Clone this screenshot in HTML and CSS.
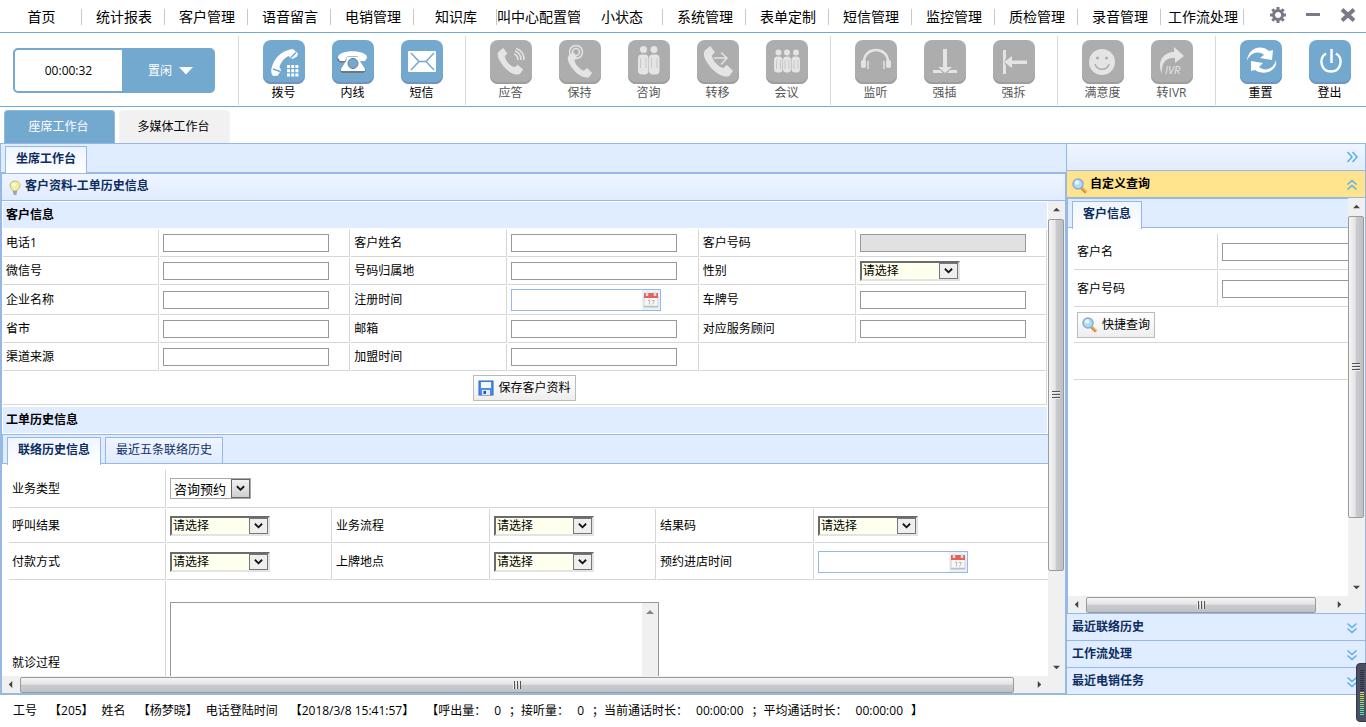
FILE: index.html
```html
<!DOCTYPE html>
<html lang="zh-CN">
<head>
<meta charset="utf-8">
<title>座席工作台</title>
<link rel="stylesheet" href="styles.css">
</head>
<body>
<svg class="sprite" aria-hidden="true">
  <symbol id="i-drop" viewBox="0 0 10 8"><path d="M1 1.500 5 5.500 9 1.500" fill="none" stroke="#111" stroke-width="2"/></symbol>
  <symbol id="i-down" viewBox="0 0 10 12"><path d="M0.500 1.500 5 5.500 9.500 1.500M0.500 6.500 5 10.500 9.500 6.500" fill="none" stroke="#5aaee6" stroke-width="1.500"/></symbol>
  <symbol id="i-tri" viewBox="0 0 8 8"><path d="M4 2 8 6H0z" fill="#444"/></symbol>
  <symbol id="i-grip" viewBox="0 0 8 8"><path d="M0 .5h8M0 3.500h8M0 6.500h8" stroke="#555"/><path d="M0 1.500h8M0 4.500h8M0 7.500h8" stroke="#eee"/></symbol>
  <symbol id="i-search" viewBox="0 0 16 16">
    <path d="M9.500 10 14 14.500" stroke="#c9822b" stroke-width="3"/><path d="M10 10 14.500 14" stroke="#f3b552" stroke-width="1.500"/>
    <circle cx="6" cy="6" r="5" fill="#a8dcfb" stroke="#8fa9d0" stroke-width="1.500"/><circle cx="5" cy="4.500" r="2.300" fill="#e4f6ff"/>
  </symbol>
  <symbol id="i-calendar" viewBox="0 0 16 16">
    <path d="M1 4h14v11H1z" fill="#f7f7f7" stroke="#d3d0d0"/><path d="M1 14.500h14" stroke="#c2bfbb" stroke-width="1.500"/><path d="M1 1h14v5H1z" fill="#e8605c"/>
    <path d="M4 0v4M12 0v4" stroke="#ddd" stroke-width="2.500"/><path d="M5 8.500 6.500 8v4.500M8.500 8.500h3L9.500 12.500" fill="none" stroke="#bbb"/>
  </symbol>
  <symbol id="i-handset" viewBox="0 0 30 30">
    <path d="M2 4 7 0 11.500 6 8.500 9.500C10 15 14 19.500 19.500 21.500L23 18.500 29 24 25.500 29C21 31 12.500 27 7 20 2 13.500-1 8 2 4z"/>
    <path d="M6 9.500 11 5.500M20 23.500 24 18.500" class="cut"/>
  </symbol>
</svg>

<header>
  <nav class="menu">
    <div class="menu-items">
      <a href="#">首页</a><a href="#">统计报表</a><a href="#">客户管理</a><a href="#">语音留言</a><a href="#">电销管理</a><a href="#">知识库</a><a href="#" class="long">呼叫中心配置管理</a><a href="#">小状态</a><a href="#">系统管理</a><a href="#">表单定制</a><a href="#">短信管理</a><a href="#">监控管理</a><a href="#">质检管理</a><a href="#">录音管理</a><a href="#">工作流处理</a>
    </div>
    <div class="window-buttons">
      <button type="button" aria-label="设置"><svg width="18" height="18" viewBox="0 0 18 18"><circle cx="9" cy="9" r="4.500" fill="none" stroke="#7b7887" stroke-width="3"/><path d="M9 1v3M9 14v3M1 9h3M14 9h3M3.300 3.300 5.500 5.500M12.500 12.500 14.700 14.700M3.300 14.700 5.500 12.500M12.500 5.500 14.700 3.300" stroke="#7b7887" stroke-width="3"/></svg></button>
      <button type="button" aria-label="最小化"><svg width="18" height="18" viewBox="0 0 18 18"><path d="M2 8.500h14" stroke="#7b7887" stroke-width="3"/></svg></button>
      <button type="button" aria-label="关闭"><svg width="18" height="18" viewBox="0 0 18 18"><path d="M3 3.500 15 14.500M15 3.500 3 14.500" stroke="#7b7887" stroke-width="4"/></svg></button>
    </div>
  </nav>

  <div class="toolbar">
    <div class="status">
      <span class="status-time">00:00:32</span>
      <button type="button" class="status-button">置闲<svg width="14" height="8" viewBox="0 0 14 8"><path d="M0 0h14L7 7.500z" fill="#fff"/></svg></button>
    </div>
    <div class="tools">
      <button type="button" class="tool"><svg viewBox="0 0 42 44"><path d="M24 10.500C26 9.500 28 9.500 30 9L35 13.500 34 16.500 29.500 19 25.500 16C21 18 17.500 23 16.500 27L18 30 15 35.500 10 36C7.500 33 8 29 9.500 25 12.500 17.500 17 13 24 10.500z"/><path d="M28 17.500 33 12.500M10 29 17 31.500" class="cut"/><path d="M24 25h3v3h-3zM28.200 25h3v3h-3zM32.400 25h3v3h-3zM24 29.200h3v3h-3zM28.200 29.200h3v3h-3zM32.400 29.200h3v3h-3zM24 33.400h3v3h-3zM28.200 33.400h3v3h-3zM32.400 33.400h3v3h-3z"/></svg>拨号</button>
      <button type="button" class="tool"><svg viewBox="0 0 42 44"><path class="shade" d="M6 17 5 20 9 23 13 22 11 27 8 31 10 33H31L34 31 29 23z"/><path d="M6 18C5 9 36 9 35 18L33 21H28L26 16.500C23 16 18 16 15 16.500L13 21H8z"/><path d="M15 17h12l1 4 5 8v2H9v-2l5-8z"/><circle cx="21" cy="23.500" r="5" fill="#74a9cf" stroke="#66798b"/></svg>内线</button>
      <button type="button" class="tool"><svg viewBox="0 0 42 44"><rect x="7" y="11" width="28" height="21" rx="1"/><path d="M10 13 18 21.500H25L33 13M10 30 18 21.500M33 30 25 21.500" class="cut"/></svg>短信</button>
    </div>
    <div class="tools">
      <button type="button" class="tool" disabled><svg viewBox="0 0 42 44"><use href="#i-handset" x="7" y="7" width="27" height="29"/><path class="line" d="M24 14C26.500 15 28 17 28 20M25 11C29 12.500 31 16 31 20M26 8.500C31 10 34 14 34 20"/></svg>应答</button>
      <button type="button" class="tool" disabled><svg viewBox="0 0 42 44"><circle class="line" cx="17" cy="12" r="6.500"/><circle class="line" cx="17" cy="12" r="3.500"/><use href="#i-handset" x="8" y="12" width="26" height="26"/></svg>保持</button>
      <button type="button" class="tool" disabled><svg viewBox="0 0 42 44"><circle cx="15.500" cy="9.500" r="3.500"/><circle cx="26" cy="9.500" r="3.500"/><rect x="10" y="14.500" width="10.500" height="20" rx="4"/><rect x="21" y="14.500" width="10.500" height="20" rx="4"/><path class="cut thin" d="M12.500 18v10M18 18v10M23.500 18v10M29 18v10"/></svg>咨询</button>
      <button type="button" class="tool" disabled><svg viewBox="0 0 42 44"><use href="#i-handset" x="6" y="6" width="31" height="31"/><path class="line" d="M17 18H30M24 12.500 30 18 24 24.500"/></svg>转移</button>
      <button type="button" class="tool" disabled><svg viewBox="0 0 42 44"><circle cx="12.500" cy="12.500" r="3"/><circle cx="21" cy="12.500" r="3"/><circle cx="30" cy="12.500" r="3"/><rect x="8" y="16.500" width="8.500" height="16" rx="3.500"/><rect x="17" y="16.500" width="8" height="16" rx="3.500"/><rect x="25.500" y="16.500" width="8.500" height="16" rx="3.500"/><path class="cut thin" d="M10.500 20v9M14.500 20v9M19 20v9M23 20v9M28 20v9M32 20v9"/></svg>会议</button>
    </div>
    <div class="tools">
      <button type="button" class="tool" disabled><svg viewBox="0 0 42 44"><path class="line bold" d="M9 22C9 6 33 6 33 22"/><rect x="6" y="20" width="5" height="8" rx="2"/><rect x="31" y="20" width="5" height="8" rx="2"/><path class="line" d="M13 21v8M29 21v8"/></svg>监听</button>
      <button type="button" class="tool" disabled><svg viewBox="0 0 42 44"><path d="M19 9h4v18h5l-7 6-7-6h5zM9 30h7l3 3H9zM33 30h-7l-3 3h10z"/></svg>强插</button>
      <button type="button" class="tool" disabled><svg viewBox="0 0 42 44"><path d="M34 20.500v3.500H19v4l-8-6 8-6v4.500zM10 10h3v8l-2 4 2 4v8h-3z"/></svg>强拆</button>
    </div>
    <div class="tools">
      <button type="button" class="tool" disabled><svg viewBox="0 0 42 44"><circle cx="20" cy="22" r="13"/><path class="cut" d="M13 24C15 31 25 31 27 24"/><circle class="dot" cx="15.500" cy="18" r="1.500"/><circle class="dot" cx="24.500" cy="18" r="1.500"/></svg>满意度</button>
      <button type="button" class="tool" disabled><svg viewBox="0 0 42 44"><path d="M11 34C5 20 14 12 23 12V7L33 16 24 23V18C14 17 10 24 11 34z"/><text class="ivr" x="14" y="34">IVR</text></svg>转IVR</button>
    </div>
    <div class="tools">
      <button type="button" class="tool"><svg viewBox="0 0 42 44"><path d="M7 21C8 8 21 4 29 11L33 10 32 20 20 18 24 15C18 10 10 13 7 21zM36 20C38 32 23 36 15 30L11 31 11 21 23 23 19 27C25 32 34 29 36 20z"/></svg>重置</button>
      <button type="button" class="tool"><svg viewBox="0 0 42 44"><path class="line bold" d="M17 13.500C9 18 12 31.500 22 31.500S35 18 27 13.500M22.500 9v14"/></svg>登出</button>
    </div>
  </div>
</header>

<div class="page-tabs">
  <button type="button" class="page-tab active">座席工作台</button>
  <button type="button" class="page-tab">多媒体工作台</button>
</div>

<main>
  <section class="work">
    <div class="tabs"><button type="button" class="tab active">坐席工作台</button></div>
    <div class="panel">
      <h2 class="panel-title"><svg width="12" height="16" viewBox="0 0 12 16"><path d="M6 1C9 1 11 3 11 5.500 11 8 8.500 9 8 11H4C3.500 9 1 8 1 5.500 1 3 3 1 6 1z" fill="#f3f0a0" stroke="#bfb97d"/><path d="M4 12h4M4.500 14h3" stroke="#8a8da0" stroke-width="1.500"/><circle cx="5" cy="4.500" r="1.500" fill="#fff"/></svg>客户资料-工单历史信息</h2>
      <div class="scroll-row">
        <div class="viewport">
          <h3 class="section">客户信息</h3>
          <table class="form customer">
            <colgroup><col class="c-label"><col><col class="c-label"><col><col class="c-label"><col></colgroup>
            <tr><td><label for="tel">电话1</label></td><td><input id="tel" class="text"></td><td><label for="name">客户姓名</label></td><td><input id="name" class="text"></td><td><label for="no">客户号码</label></td><td><input id="no" class="text" disabled></td></tr>
            <tr><td><label for="wx">微信号</label></td><td><input id="wx" class="text"></td><td><label for="area">号码归属地</label></td><td><input id="area" class="text"></td><td><label for="sex">性别</label></td><td><span class="pick"><select id="sex"><option>请选择</option></select><svg><use href="#i-drop"/></svg></span></td></tr>
            <tr class="r-date"><td><label for="corp">企业名称</label></td><td><input id="corp" class="text"></td><td><label for="reg">注册时间</label></td><td><span class="date"><input id="reg"><svg><use href="#i-calendar"/></svg></span></td><td><label for="plate">车牌号</label></td><td><input id="plate" class="text"></td></tr>
            <tr><td><label for="city">省市</label></td><td><input id="city" class="text"></td><td><label for="mail">邮箱</label></td><td><input id="mail" class="text"></td><td><label for="adv">对应服务顾问</label></td><td><input id="adv" class="text"></td></tr>
            <tr><td><label for="src">渠道来源</label></td><td><input id="src" class="text"></td><td><label for="join">加盟时间</label></td><td><input id="join" class="text"></td><td colspan="2"></td></tr>
            <tr class="r-save"><td colspan="6"><button type="button" class="action"><svg width="16" height="16" viewBox="0 0 16 16"><rect x="1" y="1" width="14" height="14" fill="#4a8df0" stroke="#2c64c8"/><rect x="3" y="2" width="10" height="6" fill="#f2f8ff"/><rect x="4" y="10" width="8" height="5" fill="#e8ecf6"/><rect x="5.500" y="11" width="2.500" height="3" fill="#2c4f9e"/></svg>保存客户资料</button></td></tr>
          </table>
          <h3 class="section">工单历史信息</h3>
          <div class="tabs nested"><button type="button" class="tab active">联络历史信息</button><button type="button" class="tab">最近五条联络历史</button></div>
          <div class="tab-body">
            <table class="form order">
              <colgroup><col class="o-label"><col class="o-field"><col class="o-label"><col class="o-field"><col class="o-label"><col></colgroup>
              <tr class="r-type"><td><label for="type">业务类型</label></td><td colspan="5"><span class="pick plain"><select id="type"><option>咨询预约</option></select><svg><use href="#i-drop"/></svg></span></td></tr>
              <tr class="r-call"><td><label for="res">呼叫结果</label></td><td><span class="pick"><select id="res"><option>请选择</option></select><svg><use href="#i-drop"/></svg></span></td><td><label for="flow">业务流程</label></td><td><span class="pick"><select id="flow"><option>请选择</option></select><svg><use href="#i-drop"/></svg></span></td><td><label for="code">结果码</label></td><td><span class="pick"><select id="code"><option>请选择</option></select><svg><use href="#i-drop"/></svg></span></td></tr>
              <tr class="r-pay"><td><label for="pay">付款方式</label></td><td><span class="pick"><select id="pay"><option>请选择</option></select><svg><use href="#i-drop"/></svg></span></td><td><label for="place">上牌地点</label></td><td><span class="pick"><select id="place"><option>请选择</option></select><svg><use href="#i-drop"/></svg></span></td><td><label for="visit">预约进店时间</label></td><td><span class="date"><input id="visit"><svg><use href="#i-calendar"/></svg></span></td></tr>
              <tr class="r-note"><td><label for="note">就诊过程</label></td><td colspan="5"><span class="note"><textarea id="note"></textarea><span class="note-bar"><svg><use href="#i-tri"/></svg></span></span></td></tr>
            </table>
          </div>
        </div>
        <div class="bar vertical"><svg class="arrow"><use href="#i-tri"/></svg><div class="thumb work-v"><svg><use href="#i-grip"/></svg></div><svg class="arrow flip"><use href="#i-tri"/></svg></div>
      </div>
      <div class="bar horizontal"><svg class="arrow left"><use href="#i-tri"/></svg><div class="thumb work-h"><svg><use href="#i-grip"/></svg></div><svg class="arrow right"><use href="#i-tri"/></svg></div>
    </div>
  </section>

  <aside class="side">
    <div class="side-head"><button type="button" class="fold" aria-label="收起"><svg width="12" height="12" viewBox="0 0 12 12"><path d="M1.500 1 6 6 1.500 11M6.500 1 11 6 6.500 11" fill="none" stroke="#5aaee6" stroke-width="1.500"/></svg></button></div>
    <button type="button" class="acc current"><svg class="lens"><use href="#i-search"/></svg><span>自定义查询</span><svg class="chev flip"><use href="#i-down"/></svg></button>
    <div class="side-body">
      <div class="scroll-row">
        <div class="viewport">
          <div class="tabs query-tabs"><button type="button" class="tab active">客户信息</button></div>
          <div class="tab-body">
            <table class="form query">
              <colgroup><col class="q-label"><col></colgroup>
              <tr><td><label for="qname">客户名</label></td><td><input id="qname" class="text"></td></tr>
              <tr><td><label for="qno">客户号码</label></td><td><input id="qno" class="text"></td></tr>
              <tr class="r-find"><td colspan="2"><button type="button" class="action"><svg width="16" height="16"><use href="#i-search"/></svg>快捷查询</button></td></tr>
              <tr><td colspan="2"></td></tr>
            </table>
          </div>
        </div>
        <div class="bar vertical"><svg class="arrow"><use href="#i-tri"/></svg><div class="thumb side-v"><svg><use href="#i-grip"/></svg></div><svg class="arrow flip"><use href="#i-tri"/></svg></div>
      </div>
      <div class="bar horizontal"><svg class="arrow left"><use href="#i-tri"/></svg><div class="thumb side-h"><svg><use href="#i-grip"/></svg></div><svg class="arrow right"><use href="#i-tri"/></svg></div>
    </div>
    <button type="button" class="acc"><span>最近联络历史</span><svg class="chev"><use href="#i-down"/></svg></button>
    <button type="button" class="acc"><span>工作流处理</span><svg class="chev"><use href="#i-down"/></svg></button>
    <button type="button" class="acc"><span>最近电销任务</span><svg class="chev"><use href="#i-down"/></svg></button>
  </aside>
</main>

<footer>
  <span class="key">工号</span><span>【205】</span><span class="key">姓名</span><span>【杨梦晓】</span><span class="key">电话登陆时间</span><span class="key">【2018/3/8 15:41:57】</span><span>【呼出量：</span><span>0</span><span>；接听量：</span><span>0</span><span>；当前通话时长：</span><span>00:00:00</span><span>；平均通话时长：</span><span>00:00:00</span><span>】</span>
</footer>
<svg class="meter" viewBox="0 0 10 59">
  <defs><linearGradient id="level" gradientUnits="userSpaceOnUse" x1="0" y1="29" x2="0" y2="53"><stop offset="0" stop-color="#e9e04a"/><stop offset="0.5" stop-color="#8fe07a"/><stop offset="1" stop-color="#45e6c6"/></linearGradient></defs>
  <path d="M10.500.5H4Q.5.500.5 4V55Q.5 58.500 4 58.500H10.500z" fill="#4a4f62" stroke="#33384a"/>
  <path d="M6 7V29" stroke="#2b2f3f" stroke-width="4" stroke-dasharray="1 1"/>
  <path d="M6 29V53" stroke="url(#level)" stroke-width="4" stroke-dasharray="1 1"/>
</svg>
</body>
</html>
```
FILE: styles.css
```css
* { box-sizing: border-box; }
html { height: 100%; }
body {
  display: flex;
  flex-direction: column;
  height: 100%;
  margin: 0;
  overflow: hidden;
  background: #fff;
  color: #000;
  font: 12px/18px "Open Sans", "Noto Sans CJK SC", sans-serif;
}
button, input, select, textarea { margin: 0; padding: 0; border: 0; border-radius: 0; font: inherit; color: inherit; background: none; }
h2, h3 { margin: 0; font-size: 12px; line-height: 18px; }
svg { display: block; flex: none; }
.sprite { position: absolute; width: 0; height: 0; }
.flip { transform: rotate(180deg); }

/* Menu */
.menu { display: flex; justify-content: space-between; height: 33px; border-bottom: 1px solid #74a9cf; }
.menu-items { display: flex; }
.menu-items a {
  display: flex;
  align-items: center;
  justify-content: center;
  width: 83px;
  height: 32px;
  padding: 2px 0 0 1px;
  background: linear-gradient(#c8c8c8, #c8c8c8) right 9px / 1px 16px no-repeat;
  color: #000;
  font-size: 14px;
  line-height: 24px;
  white-space: nowrap;
  text-decoration: none;
}
.menu-items .long { overflow: hidden; }
.menu-items a:first-child { width: 82px; }
.window-buttons { display: flex; gap: 17px; padding: 6px 9px 8px 0; }

/* Toolbar */
.toolbar { display: flex; height: 74px; border-bottom: 1px solid #74a9cf; }
.status {
  display: flex;
  flex: none;
  width: 202px;
  height: 45px;
  margin: 15px 23px 0 13px;
  border: 2px solid #74a9cf;
  border-radius: 5px;
}
.status-time { width: 107px; line-height: 41px; text-align: center; }
.status-button { display: flex; flex: 1; align-items: center; justify-content: center; gap: 7px; padding-left: 6px; background: #74a9cf; color: #fff; }
.tools { display: flex; flex: none; height: 69px; margin-top: 3px; padding: 0 9px 0 10px; border-left: 1px solid #d9d9d9; }
.tools:last-child { padding-right: 0; }
.tool { display: flex; flex-direction: column; align-items: center; width: 69px; padding-top: 4px; }
.tool > svg {
  width: 42px;
  height: 44px;
  border-radius: 8px;
  background: #74a9cf;
  box-shadow: inset 0 -2px #7591bd;
  fill: #fff;
}
.tool .cut { fill: none; stroke: #74a9cf; stroke-width: 1.5; }
.tool .line { fill: none; stroke: #fff; stroke-width: 1.5; }
.tool .bold { stroke-width: 2.5; }
.tool .thin { stroke-width: 0.5; }
.tool .shade { fill: #66798b; }
.tool:disabled { color: #555; }
.tool:disabled > svg { background: #adadad; box-shadow: inset 0 -2px #9e9e9e; fill: #e4e4e4; }
.tool:disabled .line { stroke: #e4e4e4; }
.tool:disabled .cut { stroke: #adadad; }
.tool .dot { fill: #adadad; }
.ivr { font: italic 11px "Open Sans", sans-serif; }

/* Page tabs */
.page-tabs { display: flex; gap: 4px; height: 36px; padding: 3px 4px 0; }
.page-tab { width: 111px; padding-right: 2px; border: 1px solid #f4f4f4; border-bottom: 0; border-radius: 4px 4px 0 0; background: #f1f1f1; }
.page-tab.active { background: #74a9cf; border-color: #8dbbe0; color: #fff; }

/* Tab strips and panels */
main { display: grid; flex: 1; grid-template-columns: minmax(0, 1fr) 300px; min-height: 0; }
.tabs { display: flex; flex: none; gap: 4px; height: 30px; padding: 2px 4px 0; border: solid #95b8e7; border-width: 1px 0; background: #e0ecff; }
.tabs.nested { border-left-width: 1px; }
.tab { height: 27px; padding: 0 10px 2px; border: 1px solid #95b8e7; background: linear-gradient(#eff5ff, #e0ecff); color: #0e2d5f; white-space: nowrap; }
.tab.active { height: 28px; padding-bottom: 3px; border-bottom: 0; background: linear-gradient(#eff5ff, #fff); font-weight: bold; }
.work { display: flex; flex-direction: column; min-height: 0; border: solid #95b8e7; border-width: 0 0 1px 1px; }
.panel { display: flex; flex: 1; flex-direction: column; min-height: 0; border: 1px solid #95b8e7; }
.panel-title {
  display: flex;
  align-items: center;
  gap: 4px;
  height: 27px;
  padding: 0 7px 3px;
  border-bottom: 1px solid #95b8e7;
  background: linear-gradient(#eff5ff, #e0ecff);
  color: #0e2d5f;
}
.panel-title svg { margin-top: 5px; }
.scroll-row { display: flex; flex: 1; min-height: 0; }
.viewport { flex: 1; min-width: 0; overflow: hidden; }
.section { height: 26px; margin: 1px; padding: 4px 3px; background: #e0ecff; }
.tab-body { padding: 5px 0 0 5px; }
.nested + .tab-body { padding-left: 6px; }

/* Forms */
.form { border-spacing: 1px; table-layout: fixed; width: 100%; }
.form td { height: 27px; padding: 0 3px; border: solid #d6d6d6; border-width: 0 1px 1px 0; vertical-align: middle; }
.c-label { width: 156px; }
.form .r-date td { height: 29px; }
.form .r-save td { height: 33px; text-align: center; }
.form.order { width: calc(100% + 60px); }
.o-label { width: 157px; }
.o-field { width: 165px; }
.form .r-type td { height: 38px; }
.form .r-call td { height: 34px; }
.form .r-pay td { height: 36px; }
.form .r-note td { height: 165px; }
.form.query { width: calc(100% + 60px); }
.form.query td { height: 36px; }
.form.query .r-find td { height: 35px; }
.q-label { width: 144px; }
.text { display: block; width: 166px; height: 18px; padding: 0 3px; border: 1px solid #999; background: #fff; }
.text:disabled { background: #e1e1e1; }
.action {
  display: inline-flex;
  align-items: center;
  gap: 4px;
  height: 26px;
  padding: 0 4px;
  border: 1px solid #bbb;
  background: linear-gradient(#fff, #eee);
  vertical-align: middle;
}
.pick {
  display: flex;
  position: relative;
  width: 100px;
  height: 20px;
  border: 2px solid;
  border-color: #6b6b6b #e3e3e3 #e3e3e3 #6b6b6b;
  background: #ffffee;
}
.pick select { width: 100%; padding: 0 1px; appearance: none; line-height: 16px; }
.pick svg { position: absolute; top: 0; right: 0; width: 19px; height: 16px; padding: 3px 4px; border: 1px solid #777; background: #efefef; pointer-events: none; }
.pick.plain { width: 81px; height: 21px; border: 1px solid #a9a9a9; background: #fff; }
.pick.plain select { padding: 0 3px; font-size: 13px; }
.pick.plain svg { width: 19px; height: 19px; border-color: #666; background: linear-gradient(#f2f2f2, #cfcfcf); }
.date { display: flex; width: 150px; height: 22px; border: 1px solid #95b8e7; background: #fff; }
.date input { flex: 1; min-width: 0; padding: 0 3px; }
.date svg { width: 18px; height: 20px; padding: 2px 1px; background: #e9f1ff; }
.note { display: flex; width: 489px; height: 123px; border: 1px solid #999; }
.note textarea { flex: 1; resize: none; overflow: hidden; }
.note-bar { width: 16px; padding: 5px 4px; background: #f0f0f0; }
.note-bar svg { width: 8px; height: 8px; opacity: 0.6; }

/* Scroll bars */
.bar { display: flex; flex: none; background: #f0f0f0; }
.bar.vertical { flex-direction: column; justify-content: space-between; width: 17px; }
.bar.horizontal { justify-content: space-between; height: 17px; padding-right: 17px; }
.arrow { width: 17px; height: 17px; padding: 5px; }
.left { transform: rotate(-90deg); }
.right { transform: rotate(90deg); }
.thumb { display: flex; align-items: center; justify-content: center; border: 1px solid #9a9a9a; border-radius: 2px; }
.thumb svg { width: 8px; height: 8px; }
.vertical .thumb { width: 16px; margin: 1px 0 auto; background: linear-gradient(90deg, #f5f5f5, #e4e4e6 45%, #cbccd0 50%, #bfc0c4); }
.horizontal .thumb { height: 16px; margin: 1px auto 0 1px; background: linear-gradient(#f5f5f5, #e4e4e6 45%, #cbccd0 50%, #bfc0c4); }
.horizontal .thumb svg { transform: rotate(90deg); }
.work-v { height: 74%; }
.work-h { width: 95%; }
.side-v { height: 76%; }
.side-h { width: 82%; }

/* Side accordion */
.side { display: flex; flex-direction: column; min-height: 0; border: 1px solid #95b8e7; }
.side-head { display: flex; align-items: center; justify-content: flex-end; height: 27px; padding-right: 7px; border-bottom: 1px solid #95b8e7; background: linear-gradient(#eff5ff, #e0ecff); }
.acc { display: flex; flex: none; align-items: center; height: 27px; padding: 0 7px 1px 5px; border-bottom: 1px solid #95b8e7; background: #e0ecff; color: #0e2d5f; font-weight: bold; text-align: left; }
.acc:last-child { height: 26px; border-bottom: 0; }
.acc.current { background: #ffe48d; color: #000; }
.acc span { flex: 1; }
.lens { width: 16px; height: 16px; margin: 4px 2px 0 0; }
.chev { width: 12px; height: 12px; margin-top: 2px; }
.side-body { display: flex; flex: 1; flex-direction: column; min-height: 0; border: solid #95b8e7; border-width: 0 0 1px 1px; }

/* Footer */
footer { display: flex; flex: none; align-items: center; gap: 8px; height: 32px; padding-left: 13px; white-space: nowrap; }
.key { margin-right: 4px; }
.meter { position: absolute; right: 0; bottom: 5px; width: 10px; height: 59px; }
```
